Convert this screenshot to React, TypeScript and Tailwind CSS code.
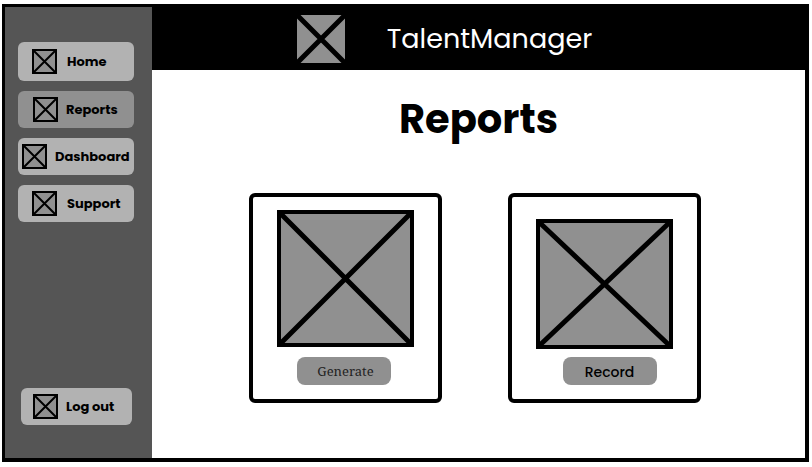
import clsx from "clsx";

type PlaceholderProps = {
  className: string;
  width: number;
  height: number;
  border: number;
  line: number;
};

function Placeholder({ className, width, height, border, line }: PlaceholderProps) {
  return (
    <svg
      className={clsx("shrink-0", className)}
      viewBox={`0 0 ${width} ${height}`}
      stroke="#000"
      aria-hidden="true"
    >
      <rect
        x={border / 2}
        y={border / 2}
        width={width - border}
        height={height - border}
        fill="#909090"
        strokeWidth={border}
      />
      <path
        d={`M${border} ${border}L${width - border} ${height - border}M${width - border} ${border}L${border} ${height - border}`}
        strokeWidth={line}
      />
    </svg>
  );
}

type NavButtonProps = {
  label: string;
  className: string;
};

function NavButton({ label, className }: NavButtonProps) {
  return (
    <button
      type="button"
      className={clsx("flex items-center rounded-md text-[13px] font-bold text-black", className)}
    >
      <Placeholder className="size-[25px]" width={25} height={25} border={2} line={2} />
      <span className="whitespace-nowrap">{label}</span>
    </button>
  );
}

export default function App() {
  return (
    <div className="flex min-h-screen bg-white pt-1 pr-[3px] pb-[5px] pl-0.5 font-['Poppins','Inter',sans-serif] text-black">
      <div className="flex grow border-[3px] border-r-4 border-b-4 border-black">
        <aside className="flex w-[147px] shrink-0 flex-col justify-between bg-[#555555] pt-[35px] pb-[33px]">
          <nav className="flex flex-col gap-2.5 pr-[18px] pl-[13px]">
            <NavButton label="Home" className="h-[39px] gap-2.5 bg-[#b2b2b2] pl-3.5" />
            <NavButton label="Reports" className="h-[37px] gap-2 bg-[#909090] pl-[15px]" />
            <NavButton label="Dashboard" className="h-[37px] gap-2 bg-[#b2b2b2] pl-1" />
            <NavButton label="Support" className="h-[37px] gap-2.5 bg-[#b2b2b2] pl-3.5" />
          </nav>
          <div className="flex flex-col pr-5 pl-4">
            <NavButton label="Log out" className="h-[37px] gap-2 bg-[#b2b2b2] pl-3" />
          </div>
        </aside>
        <div className="flex min-w-0 grow flex-col">
          <header className="flex h-[63px] items-center justify-center gap-10 bg-black pr-[70px]">
            <Placeholder className="size-[52px]" width={52} height={52} border={2} line={5} />
            <span className="text-[27px] leading-8 text-white">TalentManager</span>
          </header>
          <main className="flex flex-col items-center gap-[50px] pt-[25px]">
            <h1 className="text-[40px] leading-12 font-bold">Reports</h1>
            <div className="flex gap-[66px] pr-[7px]">
              <section className="flex h-[210px] w-[193px] flex-col items-center justify-end gap-2.5 rounded-md border-4 border-black pb-3.5">
                <Placeholder className="h-[137px] w-[137px]" width={137} height={137} border={4} line={5} />
                <div className="flex pr-1">
                  <button
                    type="button"
                    className="h-7 w-[94px] rounded-lg bg-[#909090] pt-0.5 pl-1 font-['Noto_Serif','DejaVu_Serif',serif] text-[13px] text-[#222222]"
                  >
                    Generate
                  </button>
                </div>
              </section>
              <section className="flex h-[210px] w-[193px] flex-col items-center justify-end gap-2 rounded-md border-4 border-black pb-3.5">
                <Placeholder className="h-[130px] w-[137px]" width={137} height={130} border={4} line={5} />
                <div className="flex pl-2.5">
                  <button type="button" className="h-7 w-[94px] rounded-lg bg-[#909090] pt-0.5 text-sm font-medium">
                    Record
                  </button>
                </div>
              </section>
            </div>
          </main>
        </div>
      </div>
    </div>
  );
}
